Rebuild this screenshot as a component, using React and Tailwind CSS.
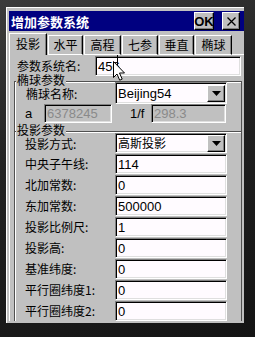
import React from 'react';

const cjk = { fontFamily: '"Noto Sans CJK SC", "Liberation Sans", sans-serif' };
const latin = { fontFamily: '"Liberation Sans", "Noto Sans CJK SC", sans-serif' };

const tabs = [
  { name: '投影', w: 'w-[38px]', active: true },
  { name: '水平', w: 'w-[35px]' },
  { name: '高程', w: 'w-[37px]' },
  { name: '七参', w: 'w-[36px]' },
  { name: '垂直', w: 'w-[35px]' },
  { name: '椭球', w: 'w-[37px]' },
];

const rows = [
  { label: '中央子午线:', value: '114' },
  { label: '北加常数:', value: '0' },
  { label: '东加常数:', value: '500000' },
  { label: '投影比例尺:', value: '1' },
  { label: '投影高:', value: '0' },
  { label: '基准纬度:', value: '0' },
  { label: '平行圈纬度1:', value: '0' },
  { label: '平行圈纬度2:', value: '0' },
];

const sunken =
  'border-t border-l border-t-[#808080] border-l-[#808080] border-b border-r border-b-white border-r-white shadow-[inset_1px_1px_0_#000,inset_-1px_-1px_0_#dfdfdf]';

function Field({ value, w, disabled }) {
  return (
    <div
      className={`${w} h-full ${sunken} ${disabled ? 'bg-[#c0c0c0] text-[#8a8a8a]' : 'bg-[#fffbff] text-black'} flex items-center pl-[2px] text-[13px] leading-none`}
      style={latin}
    >
      {value}
    </div>
  );
}

function DropButton() {
  return (
    <div className="ml-auto mr-[1px] w-[18px] h-[17px] bg-[#c0c0c0] border-t border-l border-white border-b border-r border-b-black border-r-black shadow-[inset_-1px_-1px_0_#808080] flex items-center justify-center">
      <svg width="9" height="5" viewBox="0 0 9 5">
        <path d="M0 0H9L4.5 5Z" fill="#000" />
      </svg>
    </div>
  );
}

function Select({ value, w, isCjk }) {
  return (
    <div
      className={`${w} h-full ${sunken} bg-[#fffbff] flex items-center pl-[2px] text-black leading-none ${isCjk ? 'text-[12px]' : 'text-[13px]'}`}
      style={isCjk ? cjk : latin}
    >
      <span>{value}</span>
      <DropButton />
    </div>
  );
}

function Pointer() {
  return (
    <div className="absolute left-[112px] top-[55px] pointer-events-none">
      <div className="absolute left-[5px] top-[0px] w-[1px] h-[10px] bg-black" />
      <svg width="14" height="22" viewBox="0 0 14 22" className="absolute left-0 top-[6px]">
        <path d="M1.5 0.5 L1.5 16.5 L5 13 L7.7 19.2 L10.2 18.1 L7.5 12 L12.5 12 Z" fill="#fff" stroke="#000" strokeWidth="1" />
      </svg>
    </div>
  );
}

export default function App() {
  return (
    <div className="relative w-[255px] h-[337px] overflow-hidden bg-[linear-gradient(160deg,#3c3c3c_0%,#222_40%,#141414_100%)] pt-[7px] pl-[6px]">
      <div className="w-[238px] h-[316px] overflow-hidden bg-[#c0c0c0] border-l border-t border-white pl-[2px] pt-[3px]" style={cjk}>
        {/* title bar */}
        <div className="h-[20px] bg-[#000080] flex items-center">
          <span className="pl-[2px] text-white text-[13px] font-bold leading-none">增加参数系统</span>
          <div className="ml-auto w-[20px] h-[18px] bg-[#c0c0c0] border-t border-l border-white border-b border-r border-b-black border-r-black shadow-[inset_-1px_-1px_0_#808080] flex items-center justify-center text-[13px] font-bold leading-none text-black" style={latin}>
            OK
          </div>
          <div className="ml-[8px] mr-[4px] w-[18px] h-[18px] bg-[#c0c0c0] border-t border-l border-white border-b border-r border-b-black border-r-black shadow-[inset_-1px_-1px_0_#808080] flex items-center justify-center">
            <svg width="9" height="9" viewBox="0 0 9 9">
              <path d="M0.5 0.5 L8.5 8.5 M8.5 0.5 L0.5 8.5" stroke="#000" strokeWidth="1.3" />
            </svg>
          </div>
        </div>

        {/* tabs */}
        <div className="mt-[2px] h-[22px] flex items-end">
          {tabs.map((t) =>
            t.active ? (
              <div key={t.name} className={`${t.w} h-[22px] border-t border-l border-white border-r border-r-black shadow-[inset_-1px_0_0_#808080] flex items-start justify-center pt-[3px] text-[12px] leading-[14px] text-black`}>
                {t.name}
              </div>
            ) : (
              <div key={t.name} className={`${t.w} ml-[1px] h-[20px] border-t border-l border-white border-r border-r-black border-b border-b-white shadow-[inset_-1px_0_0_#808080] flex items-start justify-center pt-[1px] text-[12px] leading-[15px] text-black`}>
                {t.name}
              </div>
            )
          )}
          <div className="flex-1 h-[20px] border-b border-white" />
        </div>

        {/* panel */}
        <div className="border-l border-white pt-[1px]">
          <div className="h-[20px] flex items-center">
            <span className="pl-[7px] w-[85px] text-[12px] leading-none text-black">参数系统名:</span>
            <Field value="456" w="w-[146px]" />
          </div>

          {/* group 1 */}
          <div className="relative mt-[5px] ml-[4px] w-[228px] border-t border-l border-r border-[#505050] shadow-[inset_1px_1px_0_#fff] pb-[8px]">
            <span className="absolute left-[1px] top-[-8px] bg-[#c0c0c0] px-[1px] text-[12px] leading-[12px] text-black">椭球参数</span>
            <div className="h-[22px] flex items-center">
              <span className="pl-[11px] w-[100px] pt-[1px] text-[12px] leading-none text-black">椭球名称:</span>
              <Select value="Beijing54" w="w-[112px]" />
            </div>
            <div className="h-[19px] flex items-center">
              <span className="pl-[10px] w-[29px] text-[13px] leading-none text-black" style={latin}>a</span>
              <Field value="6378245" w="w-[68px]" disabled />
              <span className="ml-[18px] w-[21px] text-[13px] leading-none text-black" style={latin}>1/f</span>
              <Field value="298.3" w="w-[75px]" disabled />
            </div>
          </div>

          {/* group 2 */}
          <div className="relative ml-[4px] w-[228px] border-t border-l border-r border-[#505050] shadow-[inset_1px_1px_0_#fff] pt-[1px] flex flex-col gap-[1px]">
            <span className="absolute left-[1px] top-[-8px] bg-[#c0c0c0] px-[1px] text-[12px] leading-[12px] text-black">投影参数</span>
            <div className="h-[20px] flex items-center">
              <span className="pl-[10px] w-[100px] pt-[1px] text-[12px] leading-none text-black">投影方式:</span>
              <Select value="高斯投影" w="w-[112px]" isCjk />
            </div>
            {rows.map((r) => (
              <div key={r.label} className="h-[20px] flex items-center">
                <span className="pl-[10px] w-[100px] text-[12px] leading-none text-black">{r.label}</span>
                <Field value={r.value} w="w-[112px]" />
              </div>
            ))}
          </div>
        </div>
      </div>
      <Pointer />
    </div>
  );
}
